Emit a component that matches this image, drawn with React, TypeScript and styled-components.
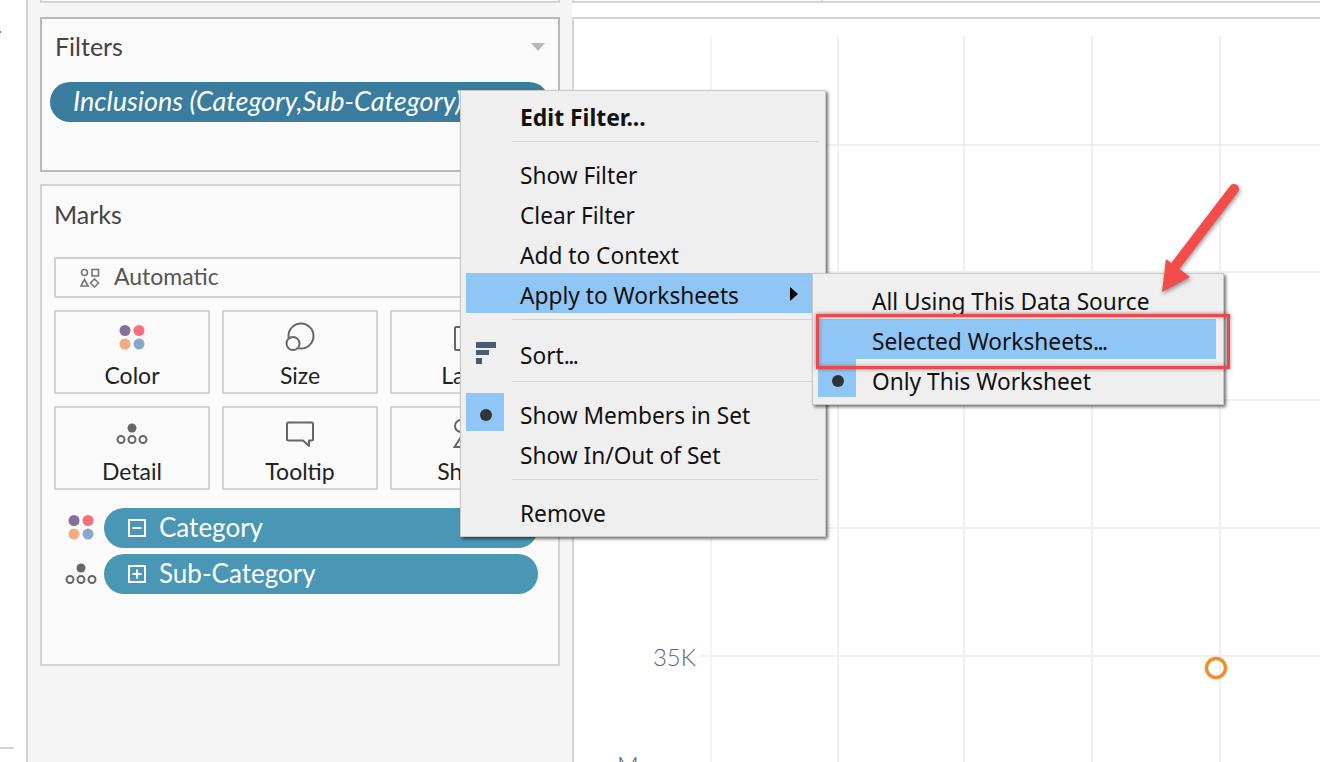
import React from 'react';
import styled, { createGlobalStyle } from 'styled-components';

const Global = createGlobalStyle`
  * { box-sizing: border-box; }
  html, body { margin: 0; padding: 0; background: #fff; overflow: hidden; }
  body { font-family: "Noto Sans", "Open Sans", Arial, sans-serif; }
`;

const Page = styled.div`
  position: relative;
  width: 1320px;
  height: 762px;
  display: flex;
  overflow: hidden;
  background: #fff;
`;

const LeftStrip = styled.div`
  width: 26px;
  flex: none;
  display: flex;
  flex-direction: column;
  padding-top: 28px;
`;
const StripTick = styled.div<{ $w: number; $gap: number; $c: string }>`
  width: ${p => p.$w}px;
  height: 2px;
  margin-top: ${p => p.$gap}px;
  background: ${p => p.$c};
`;

const Sidebar = styled.aside`
  width: 546px;
  flex: none;
  border-left: 2px solid #d2d2d2;
  background: #f5f5f5;
  padding: 0 12px;
  display: flex;
  flex-direction: column;
`;

const TopStub = styled.div`
  height: 3px;
  border: 2px solid #d4d4d4;
  border-top: none;
  background: #fafafa;
`;

const FilterCard = styled.section`
  margin-top: 14px;
  height: 155px;
  border: 2px solid #b9b9b9;
  background: #fafafa;
`;

const MarksCard = styled.section`
  margin-top: 12px;
  height: 482px;
  border: 2px solid #d4d4d4;
  background: #fafafa;
  padding: 15px 12px 0;
`;

const CardHeader = styled.header`
  display: flex;
  align-items: center;
  justify-content: space-between;
  padding: 14px 13px 21px 13px;
`;

const CardTitle = styled.h2`
  margin: 0;
  font: 400 25px/26px "Lato", "Noto Sans", sans-serif;
  padding-bottom: 2px;
  color: #444;
`;

const MarksTitle = styled(CardTitle)`
  margin-bottom: 28px;
`;

const Caret = styled.span`
  width: 0;
  height: 0;
  border-left: 7px solid transparent;
  border-right: 7px solid transparent;
  border-top: 8px solid #b8b8b8;
`;

const FilterPill = styled.div`
  margin: 0 9px 0 8px;
  height: 40px;
  border-radius: 20px;
  background: #397c9d;
  color: #fff;
  padding-left: 23px;
  font: italic 400 27px/38px "Lato", "Noto Sans", sans-serif;
  white-space: nowrap;
  overflow: hidden;
`;

const MarkType = styled.div`
  width: 492px;
  height: 41px;
  border: 2px solid #d0d0d0;
  border-radius: 2px;
  display: flex;
  align-items: center;
  gap: 14px;
  padding: 0 0 3px 24px;
  font: 400 23px/28px "Lato", "Noto Sans", sans-serif;
  color: #555;
  svg { margin-top: 3px; }
`;

const TileGrid = styled.div`
  margin-top: 12px;
  width: 492px;
  display: grid;
  grid-template-columns: repeat(3, 156px);
  grid-auto-rows: 84px;
  gap: 12px;
`;

const Tile = styled.div`
  border: 2px solid #d4d4d4;
  display: flex;
  flex-direction: column;
  align-items: center;
  padding-top: 9px;
  font: 400 23px/28px "Lato", "Noto Sans", sans-serif;
  color: #222;
  svg { overflow: visible; flex: none; }
  span { margin-top: 8px; }
`;

const PillList = styled.div`
  margin-top: 18px;
  display: flex;
  flex-direction: column;
  gap: 6px;
`;

const PillRow = styled.div`
  display: flex;
  align-items: flex-start;
  svg { overflow: visible; flex: none; }
`;

const IconSlot = styled.div`
  width: 50px;
  height: 32px;
  margin-top: 3px;
  flex: none;
  display: flex;
  justify-content: center;
  padding-left: 4px;
`;

const FieldPill = styled.div`
  width: 434px;
  height: 40px;
  border-radius: 20px;
  background: #4a96b5;
  color: #fff;
  display: flex;
  align-items: center;
  gap: 13px;
  padding-left: 24px;
  font: 400 26px/34px "Lato", "Noto Sans", sans-serif;
  span { margin-top: -3px; }
`;

const Main = styled.main`
  flex: 1;
  display: flex;
  flex-direction: column;
  min-width: 0;
`;

const TopBar = styled.div`
  height: 3px;
  flex: none;
  display: flex;
  border-bottom: 2px solid #d4d4d4;
  background: #fafafa;
  border-left: 2px solid #d4d4d4;
`;
const TopBarCell = styled.div`
  width: 249px;
  border-right: 2px solid #d4d4d4;
`;

const Canvas = styled.div`
  margin-top: 14px;
  flex: 1;
  border-left: 2px solid #d4d4d4;
  border-top: 2px solid #d4d4d4;
  background: #fff;
  overflow: hidden;
  svg { display: block; }
`;

const Menu = styled.div`
  position: absolute;
  left: 460px;
  top: 90px;
  width: 366px;
  height: 447px;
  padding-top: 4px;
  background: #efefef;
  border: 1px solid #c9c9c9;
  box-shadow: 2px 2px 3px rgba(0, 0, 0, 0.55);
`;

const Row = styled.div<{ $active?: boolean; $bold?: boolean }>`
  position: relative;
  height: 40px;
  margin: 0 5px;
  padding: 5px 0 0 54px;
  display: flex;
  align-items: center;
  background: ${p => (p.$active ? '#90c6f5' : 'transparent')};
  font-size: ${p => (p.$bold ? 22.9 : 22.7)}px;
  font-weight: ${p => (p.$bold ? 700 : 400)};
  line-height: 34px;
  color: #111;
  white-space: nowrap;
`;

const Dots = styled.span`
  letter-spacing: -1.6px;
`;

const Sep = styled.div<{ $before?: number; $after?: number }>`
  height: 1px;
  margin: ${p => p.$before ?? 6}px 7px ${p => p.$after ?? 11}px 51px;
  background: #d4d4d4;
`;

const CheckBox = styled.span`
  position: absolute;
  left: 0;
  top: 0;
  width: 38px;
  height: 38px;
  padding: 5px 0 0 1px;
  background: #90c6f5;
  display: flex;
  align-items: center;
  justify-content: center;
  &::after {
    content: '';
    width: 12px;
    height: 12px;
    border-radius: 50%;
    background: #333;
  }
`;

const SortBars = styled.svg`
  position: absolute;
  left: 10px;
  top: 9px;
`;

const SubArrow = styled.span`
  position: absolute;
  left: 324px;
  top: 14px;
  width: 0;
  height: 0;
  border-top: 7px solid transparent;
  border-bottom: 7px solid transparent;
  border-left: 8px solid #000;
`;

const SubMenu = styled.div`
  position: absolute;
  left: 812px;
  top: 273px;
  width: 412px;
  height: 132px;
  padding: 5px 2px 0 0;
  background: #efefef;
  border: 1px solid #c9c9c9;
  box-shadow: 2px 2px 3px rgba(0, 0, 0, 0.55);
`;

const RedBox = styled.div`
  position: absolute;
  left: 816px;
  top: 314px;
  width: 414px;
  height: 55px;
  border: 3px solid #f0474a;
  box-shadow: 0 0 4px rgba(0, 0, 0, 0.45), inset 0 0 4px rgba(0, 0, 0, 0.35);
`;

const ArrowArt = styled.svg`
  position: absolute;
  left: 1150px;
  top: 175px;
  filter: drop-shadow(1px 2px 2px rgba(0, 0, 0, 0.4));
`;

const ChartLabel = styled.text`
  font: 300 24px "Lato", "Noto Sans", sans-serif;
  fill: #666;
`;

const dots = (
  <>
    <circle cx="9" cy="9.5" r="5.5" fill="#86709a" />
    <circle cx="23" cy="9.5" r="5.5" fill="#f8707f" />
    <circle cx="9" cy="23" r="5.5" fill="#f3ab82" />
    <circle cx="23" cy="23" r="5.5" fill="#88a8cc" />
  </>
);
const ColorIcon = () => <svg width="32" height="32" viewBox="0 0 32 32">{dots}</svg>;

const DetailIcon = () => (
  <svg width="32" height="32" viewBox="0 0 32 32" fill="none" stroke="#666" strokeWidth="2">
    <circle cx="16" cy="11" r="4.5" fill="#666" stroke="none" />
    <circle cx="5" cy="22.5" r="3.5" />
    <circle cx="16" cy="22.5" r="3.5" />
    <circle cx="27" cy="22.5" r="3.5" />
  </svg>
);

const SizeIcon = () => (
  <svg width="32" height="32" viewBox="0 0 32 32" fill="none" stroke="#666" strokeWidth="2">
    <circle cx="17" cy="15" r="12.5" />
    <circle cx="9" cy="22.5" r="6.5" fill="#fafafa" />
  </svg>
);

const LabelIcon = () => (
  <svg width="32" height="32" viewBox="0 0 32 32" fill="none" stroke="#666" strokeWidth="2">
    <rect x="3" y="6" width="26" height="23" rx="1" />
  </svg>
);

const TooltipIcon = () => (
  <svg width="32" height="32" viewBox="0 0 32 32" fill="none" stroke="#666" strokeWidth="2" strokeLinejoin="round">
    <path d="M4.5 5.5h23a1.5 1.5 0 0 1 1.5 1.5v15a1.5 1.5 0 0 1-1.5 1.5H25v5.5l-6-5.5H4.5A1.5 1.5 0 0 1 3 22V7a1.5 1.5 0 0 1 1.5-1.5z" />
  </svg>
);

const ShapeIcon = () => (
  <svg width="32" height="32" viewBox="0 0 32 32" fill="none" stroke="#666" strokeWidth="2">
    <circle cx="9" cy="9" r="6" />
    <path d="M9 20l6.5 10h-13z" />
  </svg>
);

const MarkTypeIcon = () => (
  <svg width="20" height="20" viewBox="0 0 20 20" fill="none" stroke="#777" strokeWidth="1.6">
    <circle cx="4.5" cy="4.5" r="3" />
    <rect x="12" y="1.5" width="6.5" height="6.5" />
    <path d="M4.5 11.5l3.6 6.5H.9z" />
    <path d="M14.5 11l4 4-4 4-4-4z" />
  </svg>
);

const BoxIcon = ({ plus }: { plus?: boolean }) => (
  <svg width="18" height="18" viewBox="0 0 18 18" fill="none" stroke="#fff" strokeWidth="2">
    <rect x="1" y="1" width="16" height="16" />
    <path d={plus ? 'M4.5 9h9M9 4.5v9' : 'M4.5 9h9'} />
  </svg>
);

const vLines = [711, 838, 964, 1092, 1220];
const hLines = [145, 272, 400, 528, 656];

export default function App() {
  return (
    <Page>
      <Global />
      <LeftStrip>
        <StripTick $w={1} $gap={3} $c="#777" />
        <StripTick $w={14} $gap={714} $c="#d4d4d4" />
      </LeftStrip>
      <Sidebar>
        <TopStub />
        <FilterCard>
          <CardHeader>
            <CardTitle>Filters</CardTitle>
            <Caret />
          </CardHeader>
          <FilterPill>Inclusions (Category,Sub-Category)</FilterPill>
        </FilterCard>
        <MarksCard>
          <MarksTitle>Marks</MarksTitle>
          <MarkType>
            <MarkTypeIcon />
            Automatic
          </MarkType>
          <TileGrid>
            <Tile><ColorIcon /><span>Color</span></Tile>
            <Tile><SizeIcon /><span>Size</span></Tile>
            <Tile><LabelIcon /><span>Label</span></Tile>
            <Tile><DetailIcon /><span>Detail</span></Tile>
            <Tile><TooltipIcon /><span>Tooltip</span></Tile>
            <Tile><ShapeIcon /><span>Shape</span></Tile>
          </TileGrid>
          <PillList>
            <PillRow>
              <IconSlot><ColorIcon /></IconSlot>
              <FieldPill><BoxIcon /><span>Category</span></FieldPill>
            </PillRow>
            <PillRow>
              <IconSlot><DetailIcon /></IconSlot>
              <FieldPill><BoxIcon plus /><span>Sub-Category</span></FieldPill>
            </PillRow>
          </PillList>
        </MarksCard>
      </Sidebar>
      <Main>
        <TopBar><TopBarCell /></TopBar>
        <Canvas>
          <svg width="746" height="743" viewBox="574 19 746 743">
            {vLines.map((x, i) => (
              <line key={x} x1={x} x2={x} y1={36} y2={762} stroke={i === 0 ? '#f4f4f4' : '#f0f0f0'} strokeWidth="2" />
            ))}
            {hLines.map(y => (
              <line key={y} x1={700} x2={1320} y1={y} y2={y} stroke="#f0f0f0" strokeWidth="2" />
            ))}
            <ChartLabel x={696} y={537} textAnchor="end">40K</ChartLabel>
            <ChartLabel x={696} y={666} textAnchor="end">35K</ChartLabel>
            <ChartLabel x={617} y={774}>M</ChartLabel>
            <circle cx="1216" cy="668" r="9.5" fill="none" stroke="#f28e2b" strokeWidth="3.5" />
          </svg>
        </Canvas>
      </Main>

      <Menu>
        <Row $bold>Edit Filter...</Row>
        <Sep />
        <Row>Show Filter</Row>
        <Row>Clear Filter</Row>
        <Row>Add to Context</Row>
        <Row $active>
          Apply to Worksheets
          <SubArrow />
        </Row>
        <Sep $before={6} $after={13} />
        <Row>
          <SortBars width="20" height="22" viewBox="0 0 20 22" fill="#4a5a70">
            <rect x="0" y="0" width="20" height="6" />
            <rect x="0" y="8" width="13" height="5" />
            <rect x="0" y="16" width="6" height="6" />
          </SortBars>
          Sort<Dots>...</Dots>
        </Row>
        <Sep $before={8} $after={11} />
        <Row>
          <CheckBox />
          Show Members in Set
        </Row>
        <Row>Show In/Out of Set</Row>
        <Sep />
        <Row>Remove</Row>
      </Menu>

      <SubMenu>
        <Row>All Using This Data Source</Row>
        <Row $active>Selected Worksheets<Dots>...</Dots></Row>
        <Row>
          <CheckBox />
          Only This Worksheet
        </Row>
      </SubMenu>

      <RedBox />
      <ArrowArt width="95" height="125" viewBox="1150 175 95 125">
        <path d="M1234 189L1176 265" stroke="#f44b4b" strokeWidth="10" strokeLinecap="round" fill="none" />
        <path d="M1162 292L1166 259L1190 277z" fill="#f44b4b" />
      </ArrowArt>
    </Page>
  );
}
